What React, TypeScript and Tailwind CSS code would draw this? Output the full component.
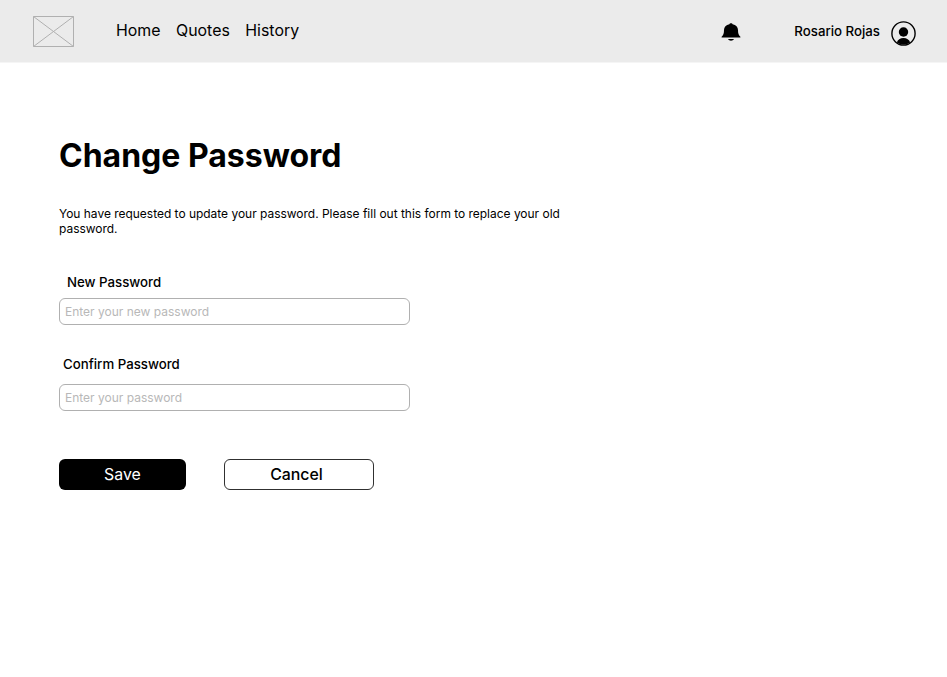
export default function App() {
  return (
    <div className="min-h-[677px] w-[947px] bg-white font-[Inter,sans-serif] text-black">
      <header className="flex h-[63px] border-b border-[#f5f5f5] bg-[#ebebeb]">
        <svg className="ml-[33px] mt-[15px] h-8 w-[41px]" viewBox="0 0 41 32" fill="none" stroke="#b0b0b0" strokeWidth="1">
          <path d="M.5 1.500h40v30H.5zM.5 1.500l40 30M40.500 1.500l-40 30" />
        </svg>
        <nav className="ml-[42px] mt-[21px] flex gap-[15.5px] text-[15.9px] leading-[20px]">
          <a>Home</a>
          <a>Quotes</a>
          <a>History</a>
        </nav>
        <svg className="ml-auto mt-[23px] h-[19px] w-[20px]" viewBox="0 0 20 19">
          <path d="M10 .2c-.8 0-1.400.4-1.600 1C5 1.800 3 4.100 3 7c0 3.300-.6 5-2.400 6.700v.9h18.800v-.9C17.600 12 17 10.300 17 7c0-2.900-2-5.200-5.400-5.800-.2-.6-.8-1-1.600-1zM7 16c.6 1.100 1.700 1.700 3 1.700s2.400-.6 3-1.700z" />
        </svg>
        <span className="ml-[53px] mt-[21px] text-[13.25px] font-medium leading-[20px]">Rosario Rojas</span>
        <svg className="ml-[11px] mr-[31px] mt-[21px] h-[25px] w-[25px]" viewBox="0 0 25 25">
          <circle cx="12.500" cy="12.500" r="11.600" fill="none" stroke="black" strokeWidth="1.400" />
          <circle cx="12.500" cy="11" r="4.700" />
          <path d="M5.800 21.500c1-3 3.400-4.500 6.700-4.500s5.700 1.500 6.700 4.500a11.600 11.600 0 0 1-13.400 0z" />
        </svg>
      </header>
      <main className="pl-[59px] pt-[73px]">
        <h1 className="text-[32px] font-bold leading-[40px]">Change Password</h1>
        <p className="mt-[30px] w-[520px] text-[11.96px] leading-[15px]">
          You have requested to update your password. Please fill out this form to replace your old password.
        </p>
        <form>
          <label className="ml-2 mt-[36px] block text-[13.25px] font-medium leading-[20px]">New Password</label>
          <input className="mt-[6px] block h-[27px] w-[351px] rounded-[6px] border border-[#b0b0b0] px-[5px] text-[12px] placeholder:text-[#b8b8b8]" placeholder="Enter your new password" />
          <label className="ml-1 mt-[29px] block text-[13.25px] font-medium leading-[20px]">Confirm Password</label>
          <input className="mt-[10px] block h-[27px] w-[351px] rounded-[6px] border border-[#b0b0b0] px-[5px] text-[12px] placeholder:text-[#b8b8b8]" placeholder="Enter your password" />
          <div className="mt-[48px] flex gap-[38px]">
            <button className="h-[31px] w-[127px] rounded-[6px] bg-black text-[15.9px] text-white">Save</button>
            <button className="h-[31px] w-[150px] rounded-[6px] border border-[#303030] pr-[5px] text-[15.9px] font-medium">Cancel</button>
          </div>
        </form>
      </main>
    </div>
  );
}
